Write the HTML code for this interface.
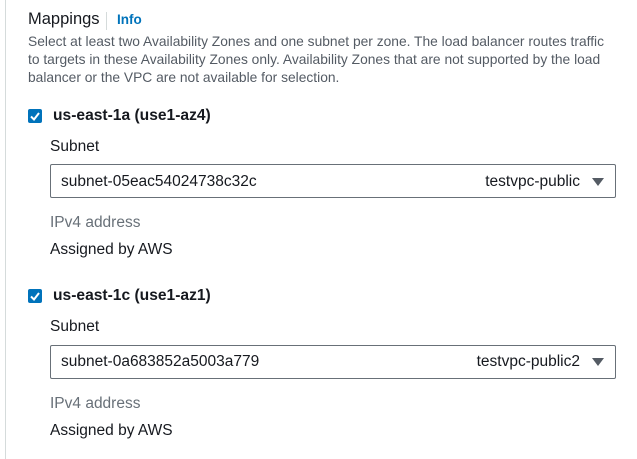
<!DOCTYPE html>
<html><head><style>
body{margin:0;width:637px;height:459px;background:#fff;position:relative;overflow:hidden;font-family:"Liberation Sans",sans-serif;color:#16191f}
.a{position:absolute;white-space:nowrap}
.bl{position:absolute;left:5px;top:0;width:1px;height:459px;background:#d5dbdb}
.d{font-size:13.8px;color:#545b64;line-height:18px}
.cb{position:absolute;width:14px;height:14px;background:#0073bb;border-radius:2px}
.lb{font-size:15.6px;font-weight:bold}
.t{font-size:15.5px}
.g{font-size:15.5px;color:#687078}
.in{position:absolute;left:50px;width:564px;height:32px;border:1px solid #687078;border-radius:2px}
.r{position:absolute;right:57px;white-space:nowrap;font-size:15.5px}
.tri{position:absolute;width:0;height:0;border-left:6px solid transparent;border-right:6px solid transparent;border-top:8px solid #545b64}
</style></head><body>
<div class="bl"></div>
<div class="a" style="left:28px;top:10px;font-size:16.5px">Mappings</div>
<div style="position:absolute;left:106px;top:12px;width:1px;height:18px;background:#d5dbdb"></div>
<div class="a" style="left:117px;top:12px;font-size:13.5px;font-weight:bold;color:#0073bb">Info</div>
<div class="a d" style="left:28px;top:33px">Select at least two Availability Zones and one subnet per zone. The load balancer routes traffic<br>to targets in these Availability Zones only. Availability Zones that are not supported by the load<br>balancer or the VPC are not available for selection.</div>

<div class="cb" style="left:28px;top:109px"><svg width="14" height="14"><path d="M3 7.5l3 3 5-6.5" stroke="#fff" stroke-width="2" fill="none"/></svg></div>
<div class="a lb" style="left:53px;top:107px">us-east-1a (use1-az4)</div>
<div class="a t" style="left:50px;top:138px">Subnet</div>
<div class="in" style="top:164px"></div>
<div class="a t" style="left:61px;top:173px">subnet-05eac54024738c32c</div>
<div class="r" style="top:173px">testvpc-public</div>
<div class="tri" style="left:592px;top:178px"></div>
<div class="a g" style="left:50px;top:214px">IPv4 address</div>
<div class="a t" style="left:50px;top:241px">Assigned by AWS</div>

<div class="cb" style="left:28px;top:289px"><svg width="14" height="14"><path d="M3 7.5l3 3 5-6.5" stroke="#fff" stroke-width="2" fill="none"/></svg></div>
<div class="a lb" style="left:53px;top:287px">us-east-1c (use1-az1)</div>
<div class="a t" style="left:50px;top:318px">Subnet</div>
<div class="in" style="top:345px"></div>
<div class="a t" style="left:61px;top:353px">subnet-0a683852a5003a779</div>
<div class="r" style="top:353px">testvpc-public2</div>
<div class="tri" style="left:592px;top:358px"></div>
<div class="a g" style="left:50px;top:395px">IPv4 address</div>
<div class="a t" style="left:50px;top:422px">Assigned by AWS</div>
</body></html>
